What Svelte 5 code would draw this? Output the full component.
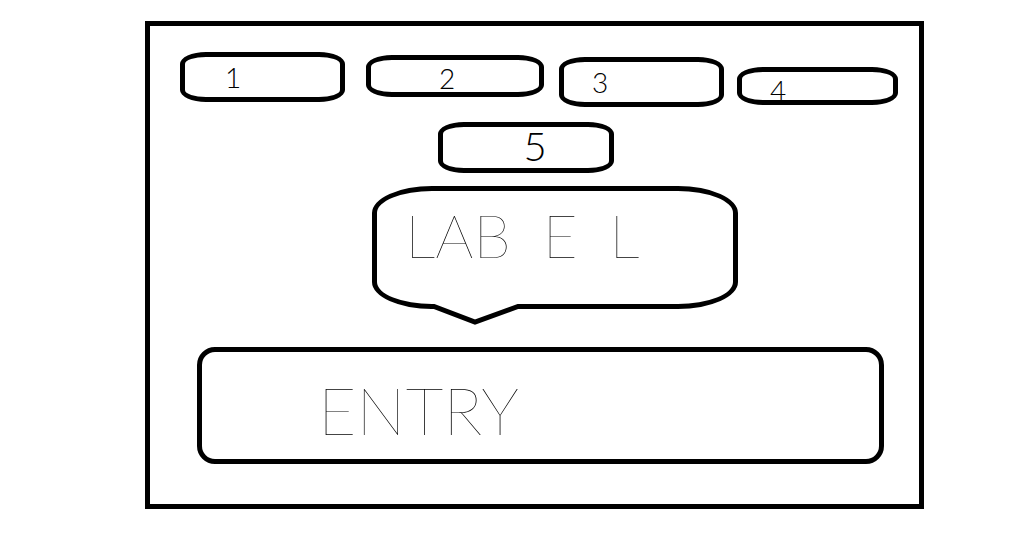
<script>
  let entry = $state('ENTRY');
</script>

<main class="frame">
  <nav class="row" aria-label="Options">
    <button class="key first">1</button>
    <button class="key second">2</button>
    <button class="key third">3</button>
    <button class="key fourth">4</button>
  </nav>

  <button class="key fifth">5</button>

  <label class="bubble" for="entry">
    <span class="word">LAB<span class="apart">E</span><span class="apart">L</span></span>
    <svg class="tail" viewBox="0 0 92 22" width="92" height="22" aria-hidden="true">
      <path d="M2 0 4 5 45 19 88 5 90 0Z" fill="#fff" />
      <path d="M0 2.5H4L45 18 88 2.5H92" fill="none" stroke="#000" stroke-width="5" />
    </svg>
  </label>

  <input id="entry" class="entry" type="text" bind:value={entry} />
</main>

<style>
  :global(body) {
    background: #fff;
  }

  .frame {
    box-sizing: border-box;
    margin: 21px 89px 47px 145px;
    padding: 26px 0 40px;
    border: 5px solid #000;
    display: flex;
    flex-direction: column;
    font-family: Lato, "Open Sans", sans-serif;
    font-weight: 100;
    color: #000;
  }

  .row {
    display: grid;
    grid-template-columns: 165fr 21px 178fr 15px 165fr 13px 161fr;
    align-items: start;
    margin: 0 21px 0 30px;
  }

  .key {
    box-sizing: border-box;
    border: 5px solid #000;
    border-radius: 26px / 12px;
    background: #fff;
    color: inherit;
    font: inherit;
    font-weight: 300;
    font-size: 28px;
    line-height: 28px;
    text-align: left;
    height: 50px;
    padding: 0 0 0 28px;
  }

  .first {
    grid-column: 1;
    padding-left: 40px;
  }

  .second {
    grid-column: 3;
    height: 42px;
    margin-top: 3px;
    padding-top: 4px;
    padding-left: 68px;
  }

  .third {
    grid-column: 5;
    margin-top: 5px;
  }

  .fourth {
    grid-column: 7;
    height: 38px;
    margin-top: 15px;
    padding-top: 4px;
  }

  .fifth {
    width: 22.8%;
    height: 51px;
    margin: 15px 0 0 37.5%;
    padding: 0 0 4px 80px;
    font-size: 40px;
    line-height: 36px;
  }

  .bubble {
    box-sizing: border-box;
    position: relative;
    width: 47.6%;
    height: 123px;
    margin: 13px 0 0 28.9%;
    padding: 12px 0 0 28px;
    border: 5px solid #000;
    border-radius: 60px / 27px;
  }

  .word {
    font-size: 60px;
    line-height: 64px;
    white-space: nowrap;
  }

  .apart {
    margin-left: 32px;
  }

  .tail {
    position: absolute;
    left: 53px;
    bottom: -22px;
  }

  .entry {
    box-sizing: border-box;
    width: 89.3%;
    height: 117px;
    margin: 38px 0 0 6.1%;
    padding: 8px 0 0 116px;
    border: 5px solid #000;
    border-radius: 18px;
    background: #fff;
    color: inherit;
    font: inherit;
    font-size: 66px;
    line-height: 72px;
  }
</style>
